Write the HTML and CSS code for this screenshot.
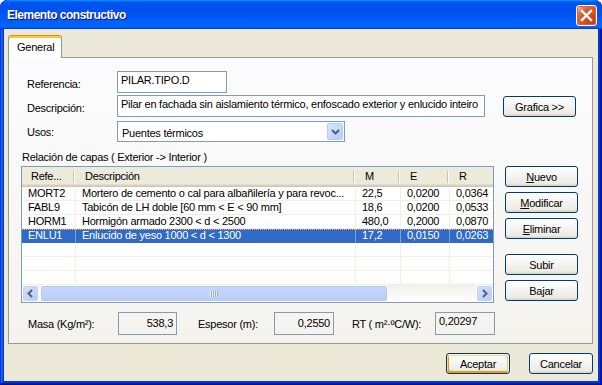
FILE: index.html
```html
<!DOCTYPE html>
<html lang="es">
<head>
    <meta charset="UTF-8">
    <title>Elemento constructivo</title>
    <link rel="stylesheet" href="styles.css">
</head>
<body>
    <div class="window">
        <div class="titlebar">
            <span class="title">Elemento constructivo</span>
            <span class="close">
                <svg width="19" height="19" viewBox="0 0 19 19"><path d="M5 5 L14 14 M14 5 L5 14" stroke="#fff" stroke-width="2.4" stroke-linecap="square"/></svg>
            </span>
        </div>
        <div class="client">
            <div class="tabs"><div class="tab">General</div></div>
            <div class="panel">
                <div class="form">
                    <div class="row">
                        <label class="lbl">Referencia:</label>
                        <div class="field field-ref">PILAR.TIPO.D</div>
                    </div>
                    <div class="row row-desc">
                        <label class="lbl">Descripción:</label>
                        <div class="field field-desc">Pilar en fachada sin aislamiento térmico, enfoscado exterior y enlucido inteiro</div>
                        <button class="btn btn-grafica">Grafica &gt;&gt;</button>
                    </div>
                    <div class="row row-usos">
                        <label class="lbl">Usos:</label>
                        <div class="combo">
                            <span class="combo-text">Puentes térmicos</span>
                            <span class="combo-drop">
                                <svg width="9" height="6" viewBox="0 0 9 6"><path d="M1 1 L4.5 4.5 L8 1" fill="none" stroke="#4d6185" stroke-width="2"/></svg>
                            </span>
                        </div>
                    </div>
                </div>

                <div class="caption">Relación de capas ( Exterior -&gt; Interior )</div>

                <div class="layers">
                    <div class="listview">
                        <div class="lv-row lv-head">
                            <div class="hcell">Refe...</div>
                            <div class="hcell">Descripción</div>
                            <div class="hcell">M</div>
                            <div class="hcell">E</div>
                            <div class="hcell">R</div>
                        </div>
                        <div class="lv-row">
                            <div class="cell">MORT2</div>
                            <div class="cell">Mortero de cemento o cal para albañilería y para revoc...</div>
                            <div class="cell">22,5</div>
                            <div class="cell">0,0200</div>
                            <div class="cell">0,0364</div>
                        </div>
                        <div class="lv-row">
                            <div class="cell">FABL9</div>
                            <div class="cell">Tabicón de LH doble [60 mm &lt; E &lt; 90 mm]</div>
                            <div class="cell">18,6</div>
                            <div class="cell">0,0200</div>
                            <div class="cell">0,0533</div>
                        </div>
                        <div class="lv-row">
                            <div class="cell">HORM1</div>
                            <div class="cell">Hormigón armado 2300 &lt; d &lt; 2500</div>
                            <div class="cell">480,0</div>
                            <div class="cell">0,2000</div>
                            <div class="cell">0,0870</div>
                        </div>
                        <div class="lv-row selected">
                            <div class="cell">ENLU1</div>
                            <div class="cell">Enlucido de yeso 1000 &lt; d &lt; 1300</div>
                            <div class="cell">17,2</div>
                            <div class="cell">0,0150</div>
                            <div class="cell">0,0263</div>
                        </div>
                        <div class="lv-row empty"><div class="cell"></div><div class="cell"></div><div class="cell"></div><div class="cell"></div><div class="cell"></div></div>
                        <div class="lv-row empty"><div class="cell"></div><div class="cell"></div><div class="cell"></div><div class="cell"></div><div class="cell"></div></div>
                        <div class="lv-row empty"><div class="cell"></div><div class="cell"></div><div class="cell"></div><div class="cell"></div><div class="cell"></div></div>
                        <div class="hscroll">
                            <div class="sb-btn">
                                <svg width="9" height="9" viewBox="0 0 9 9"><path d="M6 1 L2.5 4.5 L6 8" fill="none" stroke="#4d6185" stroke-width="2"/></svg>
                            </div>
                            <div class="sb-thumb"><span class="grip"></span></div>
                            <div class="sb-track"></div>
                            <div class="sb-btn">
                                <svg width="9" height="9" viewBox="0 0 9 9"><path d="M3 1 L6.5 4.5 L3 8" fill="none" stroke="#4d6185" stroke-width="2"/></svg>
                            </div>
                        </div>
                    </div>
                    <div class="side-buttons">
                        <button class="btn"><u>N</u>uevo</button>
                        <button class="btn"><u>M</u>odificar</button>
                        <button class="btn"><u>E</u>liminar</button>
                        <button class="btn btn-gap">Subir</button>
                        <button class="btn">Bajar</button>
                    </div>
                </div>

                <div class="totals">
                    <span class="tlabel tl-masa">Masa (Kg/m²):</span>
                    <div class="tbox tb-masa">538,3</div>
                    <span class="tlabel tl-esp">Espesor (m):</span>
                    <div class="tbox tb-esp">0,2550</div>
                    <span class="tlabel tl-rt">RT ( m²·ºC/W):</span>
                    <div class="tbox tb-rt">0,20297</div>
                </div>
            </div>
            <div class="footer">
                <button class="btn btn-default">Aceptar</button>
                <button class="btn">Cancelar</button>
            </div>
        </div>
    </div>
</body>
</html>
```

FILE: styles.css
```css
* {
    box-sizing: border-box;
}
body {
    margin: 0;
    background: #fff;
    font-family: "Liberation Sans", Arial, sans-serif;
    font-size: 11px;
    letter-spacing: -0.25px;
    color: #000;
}
.window {
    width: 602px;
    height: 385px;
    display: flex;
    flex-direction: column;
    background: #0831d9;
    border-radius: 8px 8px 0 0;
    overflow: hidden;
    box-shadow: inset -1px -1px #00138c, inset 1px 1px #0831d9, inset -2px -2px #001ea0, inset 2px 2px #166aee, inset -3px -3px #003bda, inset 3px 3px #0855dd;
}
.titlebar {
    height: 29px;
    flex: none;
    display: flex;
    align-items: center;
    justify-content: space-between;
    padding: 0 5px 0 7px;
    background: linear-gradient(180deg, #0997ff, #0053ee 8%, #0050ee 40%, #06f 88%, #06f 93%, #005bff 95%, #003dd7 96%, #003dd7);
    border-radius: 8px 7px 0 0;
}
.title {
    color: #fff;
    font-weight: bold;
    font-size: 12px;
    letter-spacing: -0.5px;
    text-shadow: 1px 1px #0f1089;
    margin-top: 1px;
}
.close {
    width: 21px;
    height: 21px;
    margin-top: 1px;
    border: 1px solid #fff;
    border-radius: 3px;
    display: flex;
    align-items: center;
    justify-content: center;
    background: radial-gradient(circle at 90% 90%, #c83c10 0, #d9532a 55%, #d5704c 72%, #f4b49c 90%, #fff 100%);
    box-shadow: inset 0 0 0 1px #e05a32;
}
.client {
    flex: 1;
    margin: 0 4px 4px;
    background: #ece9d8;
    padding: 6px 0 0 4px;
}
.tabs {
    display: flex;
    height: 22px;
}
.tab {
    position: relative;
    z-index: 1;
    width: 54px;
    height: 23px;
    padding: 5px 0 0 8px;
    background: #fff;
    border: 1px solid #919b9c;
    border-top: 1px solid #e68b2c;
    border-bottom: none;
    border-radius: 3px 3px 0 0;
    box-shadow: inset 0 2px #ffc83c;
}
.panel {
    width: 585px;
    height: 287px;
    border: 1px solid #919b9c;
    background: linear-gradient(180deg, #fcfcfe, #f4f3ee);
}
.form {
    padding: 13px 0 0 18px;
}
.row {
    display: flex;
    align-items: flex-start;
    height: 22px;
}
.row-desc {
    margin-top: 2px;
}
.row-usos {
    margin-top: 4px;
    height: 21px;
}
.lbl {
    width: 90px;
    padding-top: 7px;
}
.row-usos .lbl {
    padding-top: 5px;
}
.field {
    height: 22px;
    border: 1px solid #7f9db9;
    background: #fff;
    padding: 2px 3px 0;
    white-space: nowrap;
    overflow: hidden;
}
.field-ref {
    width: 110px;
}
.field-desc {
    width: 368px;
}
.combo {
    width: 228px;
    height: 21px;
    border: 1px solid #7f9db9;
    background: #fff;
    display: flex;
    justify-content: space-between;
    padding: 1px;
}
.combo-text {
    padding: 4px 0 0 3px;
}
.combo-drop {
    width: 16px;
    height: 17px;
    border: 1px solid #b9cbf4;
    border-radius: 2px;
    background: linear-gradient(135deg, #dbe5fd, #b8cbf7);
    display: flex;
    align-items: center;
    justify-content: center;
}
.btn {
    font: inherit;
    letter-spacing: inherit;
    color: #000;
    height: 21px;
    padding: 0;
    border: 1px solid #003c74;
    border-radius: 3px;
    background: linear-gradient(180deg, #fff, #ecebe5 86%, #d8d0c4);
}
.btn-grafica {
    width: 73px;
    margin: 1px 0 0 18px;
}
.caption {
    margin-top: 9px;
    padding-left: 13px;
    height: 13px;
    line-height: 13px;
}
.layers {
    display: flex;
    margin-top: 2px;
    padding-left: 12px;
}
.listview {
    width: 473px;
    height: 137px;
    border: 1px solid #7f9db9;
    background: #fff;
    overflow: hidden;
}
.lv-row {
    display: grid;
    grid-template-columns: 54px 280px 45px 49px 60px;
    height: 14px;
    line-height: 13px;
}
.cell {
    padding-left: 6px;
    white-space: nowrap;
    overflow: hidden;
    border-right: 1px solid #f1efe2;
    border-bottom: 1px solid #f1efe2;
}
.lv-head {
    height: 20px;
    line-height: 18px;
    background: #ebeadb;
    box-shadow: inset 0 -1px #cbc7b8, inset 0 -2px #d6d2c2, inset 0 -3px #e2decd;
}
.hcell {
    position: relative;
    padding-left: 9px;
    white-space: nowrap;
    overflow: hidden;
}
.hcell::after {
    content: "";
    position: absolute;
    right: 2px;
    top: 4px;
    width: 1px;
    height: 12px;
    background: #c7c5b2;
    box-shadow: 1px 0 #fff;
}
.selected {
    color: #fff;
    background: #316ac5 linear-gradient(to right, #f0b070 50%, transparent 50%) repeat-x 0 0 / 2px 1px;
}
.selected .cell {
    border-right-color: #7fa0d8;
    border-bottom-color: #316ac5;
}
.hscroll {
    display: flex;
    height: 17px;
    background: linear-gradient(180deg, #f3f1ec, #fefefb);
}
.sb-btn {
    width: 17px;
    height: 17px;
    border: 1px solid #fff;
    border-radius: 3px;
    background: linear-gradient(135deg, #d5e1fe, #b6c9f6);
    display: flex;
    align-items: center;
    justify-content: center;
    box-shadow: inset 0 0 0 1px #c3d3fb;
}
.sb-thumb {
    width: 348px;
    margin-left: 1px;
    border: 1px solid #fff;
    border-radius: 3px;
    background: linear-gradient(180deg, #c9d8fc, #b9ccf8);
    box-shadow: inset 0 0 0 1px #b3c7f5;
    display: flex;
    align-items: center;
    justify-content: center;
}
.grip {
    width: 8px;
    height: 6px;
    background: repeating-linear-gradient(90deg, #eef3fe 0 1px, #8faaeb 1px 2px);
}
.sb-track {
    flex: 1;
}
.side-buttons {
    display: flex;
    flex-direction: column;
    gap: 5px;
    margin-left: 11px;
}
.side-buttons .btn {
    width: 73px;
}
.side-buttons .btn-gap {
    margin-top: 10px;
}
.totals {
    display: flex;
    align-items: center;
    margin-top: 9px;
    padding-left: 19px;
}
.tlabel {
    white-space: nowrap;
}
.tl-masa {
    width: 90px;
}
.tl-esp {
    width: 76px;
    margin-left: 21px;
}
.tl-rt {
    width: 83px;
    margin-left: 18px;
}
.tbox {
    height: 23px;
    border: 1px solid #7f9db9;
    padding: 4px 3px 0;
    text-align: right;
}
.tb-masa {
    width: 59px;
}
.tb-esp {
    width: 60px;
}
.tb-rt {
    width: 60px;
    text-align: left;
    padding-top: 2px;
}
.footer {
    width: 585px;
    display: flex;
    justify-content: flex-end;
    gap: 19px;
    margin-top: 9px;
}
.footer .btn {
    width: 64px;
}
.btn-default {
    box-shadow: inset -1px 1px #fff0cf, inset 1px 2px #fdd889, inset -2px 2px #fbc761, inset 2px -2px #e5a01a;
}
```
